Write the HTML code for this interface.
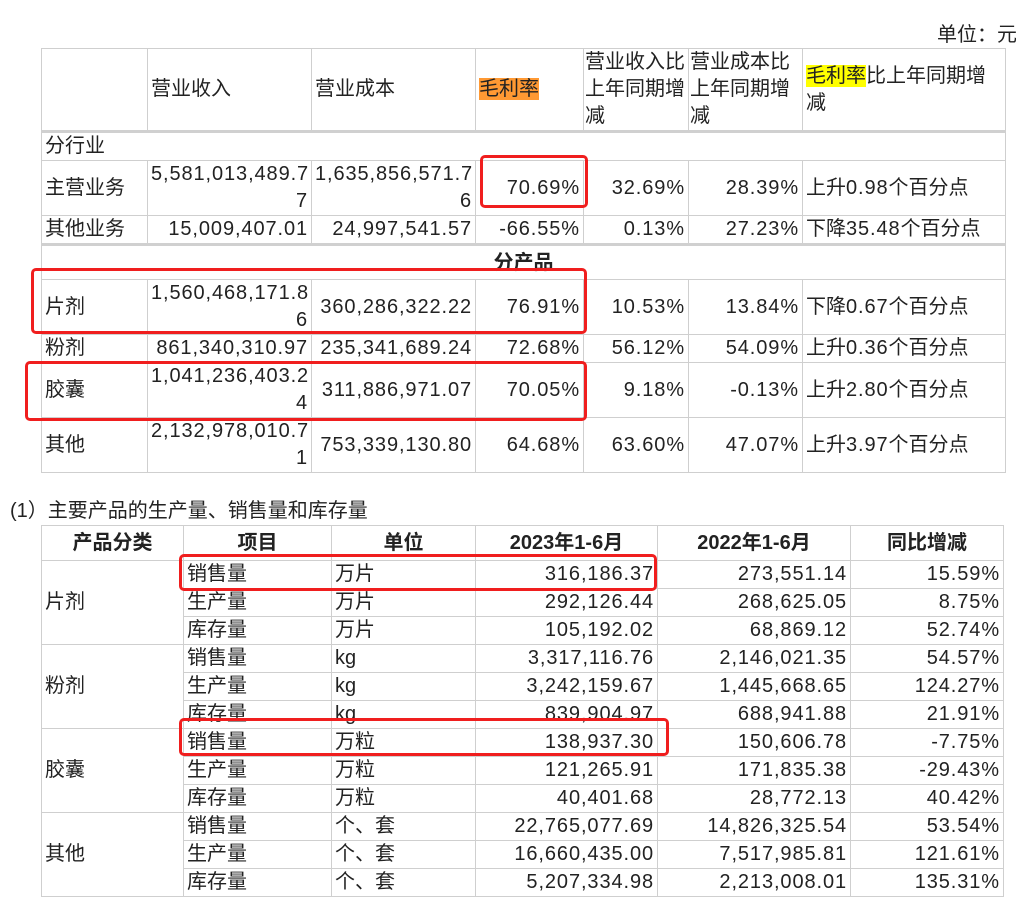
<!DOCTYPE html>
<html><head><meta charset="utf-8"><style>
body{margin:0;background:#fff;width:1016px;height:913px;position:relative;overflow:hidden;font-family:"Liberation Sans","Noto Sans CJK SC",sans-serif;font-size:20px;color:#222}
table{position:absolute;border-collapse:collapse;table-layout:fixed}
td{border:1px solid #cfcfcf;padding:0 3px;line-height:27px;white-space:nowrap;overflow:hidden;letter-spacing:0}
.r{text-align:right;letter-spacing:0.9px}.c{text-align:center}.b{font-weight:bold}
.tk td{border-bottom:3px solid #d0d0d0}
.box{position:absolute;border:3px solid #f01e1e;border-radius:5px;box-sizing:border-box}
</style></head><body>
<div style="position:absolute;left:937px;top:18px;white-space:nowrap">单位：元</div>
<table style="left:41px;top:48px;width:964px">
<colgroup><col style="width:106px"><col style="width:164px"><col style="width:164px"><col style="width:108px"><col style="width:105px"><col style="width:114px"><col style="width:203px"></colgroup>
<tr class="tk" style="height:82px"><td></td><td>营业收入</td><td>营业成本</td><td><span style="background:#ff9933">毛利率</span></td><td style="vertical-align:top;white-space:normal;padding:0 1px">营业收入比上年同期增减</td><td style="vertical-align:top;white-space:normal;padding:0 1px">营业成本比上年同期增减</td><td style="white-space:normal"><span style="background:#ffff00">毛利率</span>比上年同期增减</td></tr>
<tr style="height:29px"><td colspan="7">分行业</td></tr>
<tr style="height:55px"><td>主营业务</td><td class="r">5,581,013,489.7<br>7</td><td class="r">1,635,856,571.7<br>6</td><td class="r">70.69%</td><td class="r">32.69%</td><td class="r">28.39%</td><td>上升<span style="letter-spacing:0.9px">0.98</span>个百分点</td></tr>
<tr class="tk" style="height:27px"><td>其他业务</td><td class="r">15,009,407.01</td><td class="r">24,997,541.57</td><td class="r">-66.55%</td><td class="r">0.13%</td><td class="r">27.23%</td><td>下降<span style="letter-spacing:0.9px">35.48</span>个百分点</td></tr>
<tr style="height:35px"><td colspan="7" class="c b" style="vertical-align:top;padding-top:4px">分产品</td></tr>
<tr style="height:53px"><td>片剂</td><td class="r">1,560,468,171.8<br>6</td><td class="r">360,286,322.22</td><td class="r">76.91%</td><td class="r">10.53%</td><td class="r">13.84%</td><td>下降<span style="letter-spacing:0.9px">0.67</span>个百分点</td></tr>
<tr style="height:28px"><td>粉剂</td><td class="r">861,340,310.97</td><td class="r">235,341,689.24</td><td class="r">72.68%</td><td class="r">56.12%</td><td class="r">54.09%</td><td>上升<span style="letter-spacing:0.9px">0.36</span>个百分点</td></tr>
<tr style="height:55px"><td>胶囊</td><td class="r">1,041,236,403.2<br>4</td><td class="r">311,886,971.07</td><td class="r">70.05%</td><td class="r">9.18%</td><td class="r">-0.13%</td><td>上升<span style="letter-spacing:0.9px">2.80</span>个百分点</td></tr>
<tr style="height:55px"><td>其他</td><td class="r">2,132,978,010.7<br>1</td><td class="r">753,339,130.80</td><td class="r">64.68%</td><td class="r">63.60%</td><td class="r">47.07%</td><td>上升<span style="letter-spacing:0.9px">3.97</span>个百分点</td></tr>
</table>
<div style="position:absolute;left:10px;top:494px">(1）主要产品的生产量、销售量和库存量</div>
<table style="left:41px;top:525px;width:962px">
<colgroup><col style="width:142px"><col style="width:148px"><col style="width:144px"><col style="width:182px"><col style="width:193px"><col style="width:153px"></colgroup>
<tr style="height:35px" class="b"><td class="c">产品分类</td><td class="c">项目</td><td class="c">单位</td><td class="c">2023年1-6月</td><td class="c">2022年1-6月</td><td class="c">同比增减</td></tr>
<tr style="height:28px"><td rowspan="3">片剂</td><td>销售量</td><td>万片</td><td class="r">316,186.37</td><td class="r">273,551.14</td><td class="r">15.59%</td></tr>
<tr style="height:28px"><td>生产量</td><td>万片</td><td class="r">292,126.44</td><td class="r">268,625.05</td><td class="r">8.75%</td></tr>
<tr style="height:28px"><td>库存量</td><td>万片</td><td class="r">105,192.02</td><td class="r">68,869.12</td><td class="r">52.74%</td></tr>
<tr style="height:28px"><td rowspan="3">粉剂</td><td>销售量</td><td>kg</td><td class="r">3,317,116.76</td><td class="r">2,146,021.35</td><td class="r">54.57%</td></tr>
<tr style="height:28px"><td>生产量</td><td>kg</td><td class="r">3,242,159.67</td><td class="r">1,445,668.65</td><td class="r">124.27%</td></tr>
<tr style="height:28px"><td>库存量</td><td>kg</td><td class="r">839,904.97</td><td class="r">688,941.88</td><td class="r">21.91%</td></tr>
<tr style="height:28px"><td rowspan="3">胶囊</td><td>销售量</td><td>万粒</td><td class="r">138,937.30</td><td class="r">150,606.78</td><td class="r">-7.75%</td></tr>
<tr style="height:28px"><td>生产量</td><td>万粒</td><td class="r">121,265.91</td><td class="r">171,835.38</td><td class="r">-29.43%</td></tr>
<tr style="height:28px"><td>库存量</td><td>万粒</td><td class="r">40,401.68</td><td class="r">28,772.13</td><td class="r">40.42%</td></tr>
<tr style="height:28px"><td rowspan="3">其他</td><td>销售量</td><td>个、套</td><td class="r">22,765,077.69</td><td class="r">14,826,325.54</td><td class="r">53.54%</td></tr>
<tr style="height:28px"><td>生产量</td><td>个、套</td><td class="r">16,660,435.00</td><td class="r">7,517,985.81</td><td class="r">121.61%</td></tr>
<tr style="height:28px"><td>库存量</td><td>个、套</td><td class="r">5,207,334.98</td><td class="r">2,213,008.01</td><td class="r">135.31%</td></tr>
</table>
<div class="box" style="left:480px;top:155px;width:108px;height:53px"></div>
<div class="box" style="left:31px;top:268px;width:556px;height:66px"></div>
<div class="box" style="left:25px;top:361px;width:562px;height:60px"></div>
<div class="box" style="left:179px;top:554px;width:478px;height:37px"></div>
<div class="box" style="left:179px;top:718px;width:490px;height:38px"></div>
</body></html>
